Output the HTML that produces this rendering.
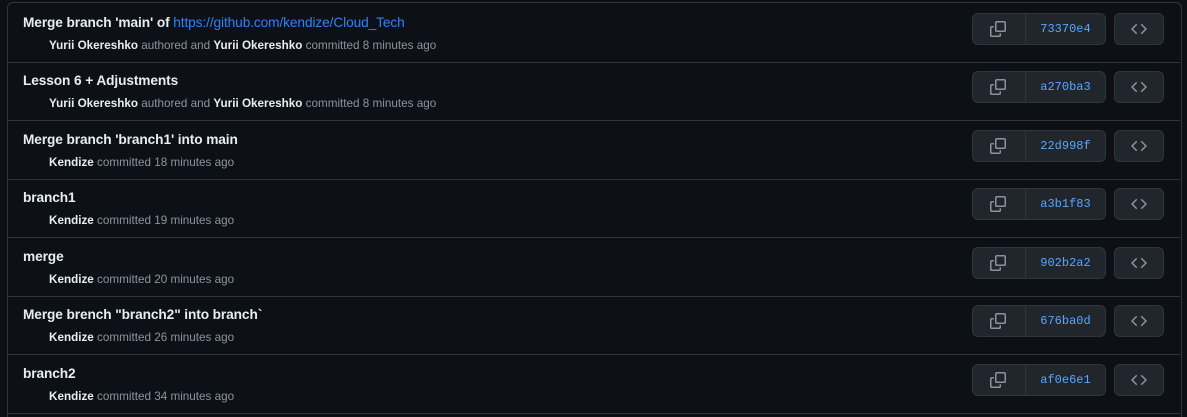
<!DOCTYPE html>
<html style="height:417px;overflow:hidden"><head><style>
body{margin:0;background:#0d1117;width:1187px;height:417px;overflow:hidden;font-family:"Liberation Sans",Arial,sans-serif;position:relative}
.box{position:absolute;left:7px;top:2px;width:1173px;height:430px;border:1px solid #30363d;border-radius:6px;}
.row{position:absolute;left:0;width:1173px;height:58px;border-bottom:1px solid #30363d;}
.t{position:absolute;left:16px;top:11px;font-size:13.7px;font-weight:bold;color:#e6edf3;letter-spacing:-0.1px}
.t a{color:#2f81f7;font-weight:normal;text-decoration:none}
.m{position:absolute;left:42px;top:35px;font-size:11.7px;color:#8b949e;}
.m b{color:#e6edf3}
.g{position:absolute;left:965px;top:9px;width:132px;height:30px;border:1px solid #30363d;border-radius:6px;background:#21262d;}
.g .d{position:absolute;left:52px;top:0;width:1px;height:30px;background:#30363d}
.g .h{position:absolute;left:53px;width:79px;top:8px;text-align:center;font-family:"Liberation Mono",monospace;font-size:12px;color:#58a6ff}
.g svg{position:absolute;left:17px;top:7px}
.c{position:absolute;left:1107px;top:9px;width:48px;height:30px;border:1px solid #30363d;border-radius:6px;background:#21262d;}
.c svg{position:absolute;left:16px;top:7px}
</style></head><body>
<div class="box"></div>
<div class="box" id="b" style="border:none;top:3.5px">
<div class="row" style="top:0"><div class="t">Merge branch 'main' of <a>https://github.com/kendize/Cloud_Tech</a></div><div class="m"><b>Yurii Okereshko</b> authored and <b>Yurii Okereshko</b> committed 8 minutes ago</div>
<div class="g"><svg width="16" height="16" viewBox="0 0 16 16" fill="#8b949e"><path d="M0 6.75C0 5.784.784 5 1.75 5h1.5a.75.75 0 010 1.5h-1.5a.25.25 0 00-.25.25v7.5c0 .138.112.25.25.25h7.5a.25.25 0 00.25-.25v-1.5a.75.75 0 011.5 0v1.5A1.75 1.75 0 019.25 16h-7.5A1.75 1.75 0 010 14.25z"/><path d="M5 1.75C5 .784 5.784 0 6.75 0h7.5C15.216 0 16 .784 16 1.75v7.5A1.75 1.75 0 0114.25 11h-7.5A1.75 1.75 0 015 9.25zm1.75-.25a.25.25 0 00-.25.25v7.5c0 .138.112.25.25.25h7.5a.25.25 0 00.25-.25v-7.5a.25.25 0 00-.25-.25z"/></svg><div class="d"></div><div class="h">73370e4</div></div>
<div class="c"><svg width="16" height="16" viewBox="0 0 16 16" fill="#8b949e"><path d="M4.72 3.22a.75.75 0 011.06 1.06L2.06 8l3.72 3.72a.75.75 0 11-1.06 1.06L.47 8.53a.75.75 0 010-1.06zm6.56 0a.75.75 0 10-1.06 1.06L13.94 8l-3.72 3.72a.75.75 0 101.06 1.06l4.25-4.25a.75.75 0 000-1.06z"/></svg></div></div>
</div>
<script>
var data=[["Lesson 6 + Adjustments","<b>Yurii Okereshko</b> authored and <b>Yurii Okereshko</b> committed 8 minutes ago","a270ba3"],
["Merge branch 'branch1' into main","<b>Kendize</b> committed 18 minutes ago","22d998f"],
["branch1","<b>Kendize</b> committed 19 minutes ago","a3b1f83"],
["merge","<b>Kendize</b> committed 20 minutes ago","902b2a2"],
["Merge brench \"branch2\" into branch`","<b>Kendize</b> committed 26 minutes ago","676ba0d"],
["branch2","<b>Kendize</b> committed 34 minutes ago","af0e6e1"]];
var box=document.getElementById('b'),first=box.querySelector('.row');
data.forEach(function(d,i){var r=first.cloneNode(true);r.style.top=(58.5*(i+1))+'px';
r.querySelector('.t').textContent=d[0];r.querySelector('.m').innerHTML=d[1];r.querySelector('.h').textContent=d[2];box.appendChild(r);});
</script>
</body></html>
